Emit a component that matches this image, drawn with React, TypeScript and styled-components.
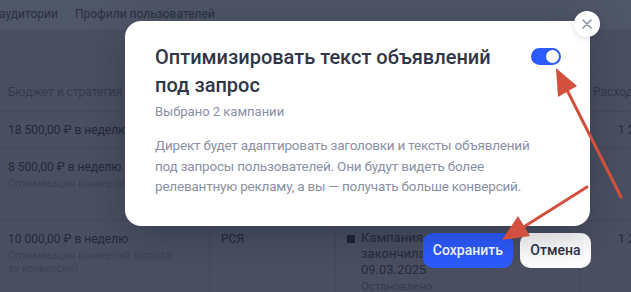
import React from 'react';
import styled, { createGlobalStyle } from 'styled-components';

const GlobalStyle = createGlobalStyle`
    html, body {
        margin: 0;
        padding: 0;
        background: #4a5062;
        overflow: hidden;
    }
    * {
        box-sizing: border-box;
    }
`;

const Page = styled.div`
    position: relative;
    width: 631px;
    height: 292px;
    overflow: hidden;
    background: #4a5062;
    font-family: Roboto, 'Liberation Sans', sans-serif;
    color: #262c3c;
`;

const NavBar = styled.div`
    display: flex;
    gap: 17px;
    height: 30px;
    align-items: center;
    padding: 0 0 2px 0;
    margin-left: -1px;
    background: #4f5668;
    border-bottom: 1px solid #4c5265;
`;

const NavTab = styled.span`
    font-size: 12px;
    color: #2a3041;
`;

const Table = styled.div`
    display: grid;
    grid-template-columns: 209px 126px 155px 90px 120px;
    grid-template-rows: 40px 37px 72px 90px;
    margin-top: 42px;
`;

const Cell = styled.div<{ $header?: boolean; $pad?: number }>`
    padding: ${({ $header }) => ($header ? '12px' : '9px')} 8px 0 ${({ $pad }) => $pad ?? 8}px;
    border-left: 1px solid rgba(30, 35, 50, 0.12);
    border-bottom: 1px solid rgba(30, 35, 50, 0.12);
    &:nth-child(5n + 1) {
        border-left: none;
    }
`;

const HeaderLabel = styled.div`
    font-size: 12px;
    line-height: 16px;
    color: #343a4b;
    white-space: nowrap;
`;

const Amount = styled.div`
    font-size: 12px;
    line-height: 18px;
    color: #232939;
    white-space: nowrap;
`;

const Strategy = styled.div`
    font-size: 10.5px;
    line-height: 12.5px;
    margin-top: 2px;
    color: #3b4254;
    max-width: 172px;
`;

const Value = styled.div`
    font-size: 12px;
    line-height: 18px;
    margin-left: 25px;
    color: #232939;
    white-space: nowrap;
`;

const Status = styled.div`
    display: flex;
    gap: 6px;
    align-items: flex-start;
`;

const StatusDot = styled.span`
    width: 8px;
    height: 8px;
    margin-top: 5px;
    flex: none;
    background: #1f2433;
`;

const StatusText = styled.div`
    width: 90px;
    font-size: 13px;
    line-height: 16px;
    color: #262c3c;
`;

const StatusNote = styled.div`
    font-size: 11.5px;
    line-height: 17px;
    color: #343a4b;
`;

const ModalLayer = styled.div`
    position: absolute;
    left: 125px;
    top: 21px;
    width: 466px;
    display: flex;
    flex-direction: column;
    align-items: flex-end;
    gap: 7px;
`;

const Modal = styled.div`
    position: relative;
    width: 465px;
    align-self: flex-start;
    padding: 23px 29px 29px 30px;
    background: #fff;
    border-radius: 16px;
    box-shadow: 0 10px 40px rgba(10, 14, 30, 0.28);
`;

const CloseButton = styled.button`
    position: absolute;
    top: -10px;
    right: -10px;
    width: 26px;
    height: 26px;
    border: none;
    border-radius: 50%;
    padding: 0;
    display: flex;
    align-items: center;
    justify-content: center;
    background: #fff;
    box-shadow: 0 2px 6px rgba(10, 14, 30, 0.12);
`;

const ModalHead = styled.div`
    display: flex;
    justify-content: space-between;
    align-items: flex-start;
`;

const Title = styled.h2`
    margin: 0;
    font-size: 20px;
    line-height: 27.5px;
    font-weight: 500;
    color: #2f3647;
    white-space: nowrap;
`;

const Toggle = styled.span<{ $on?: boolean }>`
    position: relative;
    width: 30px;
    height: 17px;
    margin-top: 4px;
    border-radius: 9px;
    background: ${({ $on }) => ($on ? '#2d5bff' : '#c8ccd6')};
    flex: none;
    &::after {
        content: '';
        position: absolute;
        top: 2px;
        left: ${({ $on }) => ($on ? '15px' : '2px')};
        width: 13px;
        height: 13px;
        border-radius: 50%;
        background: #fff;
    }
`;

const Selected = styled.div`
    margin-top: 4px;
    font-size: 13px;
    line-height: 18px;
    color: #8a90a3;
`;

const Description = styled.p`
    margin: 14px 0 0;
    font-size: 13.5px;
    line-height: 20.5px;
    letter-spacing: -0.2px;
    color: #8990a4;
    white-space: nowrap;
`;

const Buttons = styled.div`
    display: flex;
    gap: 7px;
`;

const Button = styled.button<{ $primary?: boolean }>`
    height: 35px;
    padding: 0 ${({ $primary }) => ($primary ? '10px' : '10.5px')};
    border: none;
    border-radius: 10px;
    font-family: Roboto, 'Liberation Sans', sans-serif;
    font-size: 14px;
    font-weight: 500;
    background: ${({ $primary }) => ($primary ? '#2d5bff' : '#fff')};
    color: ${({ $primary }) => ($primary ? '#fff' : '#2c3345')};
`;

const Annotations = styled.svg`
    position: absolute;
    inset: 0;
    pointer-events: none;
`;

const rows = [
    { amount: '18 500,00 ₽ в неделю', value: '1 2' },
    { amount: '8 500,00 ₽ в неделю', strategy: 'Оптимизация конверсий' },
    {
        amount: '10 000,00 ₽ в неделю',
        strategy: 'Оптимизация конверсий (оплата за конверсии)',
        network: 'РСЯ',
        status: true,
        value: '1 2',
    },
];

const App: React.FC = () => {
    return (
        <Page>
            <GlobalStyle />
            <NavBar>
                <NavTab>аудитории</NavTab>
                <NavTab>Профили пользователей</NavTab>
            </NavBar>

            <Table>
                <Cell $header><HeaderLabel>Бюджет и стратегия</HeaderLabel></Cell>
                <Cell $header $pad={11} />
                <Cell $header $pad={11} />
                <Cell $header />
                <Cell $header $pad={12}><HeaderLabel>Расход</HeaderLabel></Cell>
                {rows.map((row, i) => (
                    <React.Fragment key={i}>
                        <Cell>
                            <Amount>{row.amount}</Amount>
                            {row.strategy && <Strategy>{row.strategy}</Strategy>}
                        </Cell>
                        <Cell $pad={11}>{row.network && <Amount>{row.network}</Amount>}</Cell>
                        <Cell $pad={11}>
                            {row.status && (
                                <Status>
                                    <StatusDot />
                                    <div>
                                        <StatusText>Кампания закончилась 09.03.2025</StatusText>
                                        <StatusNote>Остановлено</StatusNote>
                                    </div>
                                </Status>
                            )}
                        </Cell>
                        <Cell />
                        <Cell $pad={12}>{row.value && <Value>{row.value}</Value>}</Cell>
                    </React.Fragment>
                ))}
            </Table>

            <ModalLayer>
                <Modal>
                    <CloseButton aria-label="Закрыть">
                        <svg width="10" height="10" viewBox="0 0 10 10">
                            <path d="M1 1L9 9M9 1L1 9" stroke="#8a90a6" strokeWidth="1.6" strokeLinecap="round" />
                        </svg>
                    </CloseButton>
                    <ModalHead>
                        <Title>
                            Оптимизировать текст объявлений
                            <br />
                            под запрос
                        </Title>
                        <Toggle $on />
                    </ModalHead>
                    <Selected>Выбрано 2 кампании</Selected>
                    <Description>
                        Директ будет адаптировать заголовки и тексты объявлений
                        <br />
                        под запросы пользователей. Они будут видеть более
                        <br />
                        релевантную рекламу, а вы — получать больше конверсий.
                    </Description>
                </Modal>
                <Buttons>
                    <Button $primary>Сохранить</Button>
                    <Button>Отмена</Button>
                </Buttons>
            </ModalLayer>

            <Annotations width="631" height="292" viewBox="0 0 631 292">
                <g stroke="#d4503e" strokeWidth="3" strokeLinecap="round" fill="#d4503e">
                    <line x1="621" y1="197" x2="566" y2="88" />
                    <polygon points="556,68 558,97 577,86" stroke="none" />
                    <line x1="587" y1="187" x2="522" y2="228" />
                    <polygon points="502,240 518,216 530,236" stroke="none" />
                </g>
            </Annotations>
        </Page>
    );
};

export default App;
